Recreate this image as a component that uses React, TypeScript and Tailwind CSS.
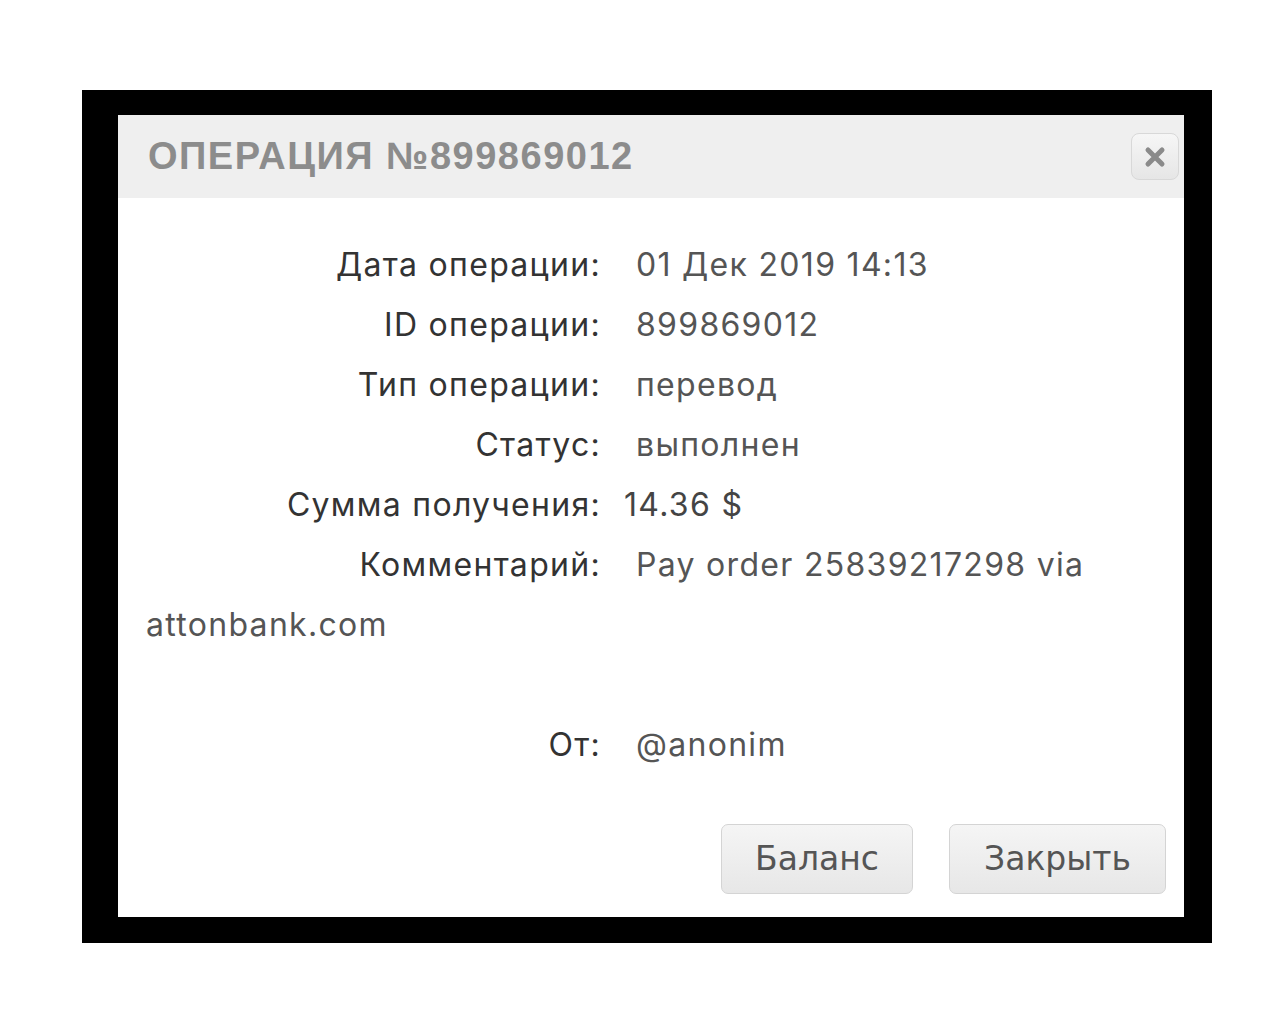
const rows: { label: string; value: string; shift?: boolean }[] = [
  { label: 'Дата операции:', value: '01 Дек 2019 14:13' },
  { label: 'ID операции:', value: '899869012' },
  { label: 'Тип операции:', value: 'перевод' },
  { label: 'Статус:', value: 'выполнен' },
  { label: 'Сумма получения:', value: '14.36 $', shift: true },
];

function Row({ label, value, shift }: { label: string; value: string; shift?: boolean }) {
  return (
    <div className="flex h-[60px] items-center">
      <span className="w-[455px] text-right text-[#333]">{label}</span>
      <span className={shift ? 'ml-[23px] text-[#444]' : 'ml-[35px] text-[#555]'}>{value}</span>
    </div>
  );
}

export default function App() {
  return (
    <div className="min-h-screen bg-white pt-[90px] pl-[82px]">
      <div className="h-[853px] w-[1130px] bg-black pt-[25px] pl-[36px]">
        <div className="flex h-[802px] w-[1066px] flex-col bg-white">
          <div className="flex h-[83px] items-center justify-between bg-[#efefef] pl-[30px] pr-[5px]">
            <h1
              className="text-[38px] font-bold tracking-[1.5px] text-[#8c8c8c]"
              style={{ fontFamily: '"Liberation Sans", Arial, sans-serif' }}
            >
              ОПЕРАЦИЯ №899869012
            </h1>
            <button className="flex h-[47px] w-[48px] items-center justify-center rounded-[8px] border border-[#d8d8d8] bg-gradient-to-b from-[#f6f6f6] to-[#e6e6e6]">
              <svg width="22" height="22" viewBox="0 0 22 22">
                <path d="M4 4 L18 18 M18 4 L4 18" stroke="#8a8a8a" strokeWidth="5" strokeLinecap="round" />
              </svg>
            </button>
          </div>

          <div
            className="pt-[37px] pl-[28px] text-[32px] tracking-[1.3px]"
            style={{ fontFamily: 'Inter, "Noto Sans", sans-serif' }}
          >
            {rows.map((r) => (
              <Row key={r.label} {...r} />
            ))}
            <div className="flex h-[60px] items-center">
              <span className="w-[455px] text-right text-[#333]">Комментарий:</span>
              <span className="ml-[35px] text-[#555]">Pay order 25839217298 via</span>
            </div>
            <div className="flex h-[60px] items-center text-[#555]">attonbank.com</div>
            <div className="h-[60px]" />
            <Row label="От:" value="@anonim" />
          </div>

          <div
            className="mt-[49px] flex justify-end gap-[36px] pr-[18px] text-[33px] text-[#555]"
            style={{ fontFamily: '"DejaVu Sans", Verdana, sans-serif' }}
          >
            <button className="h-[70px] w-[192px] rounded-[7px] border border-[#d4d4d4] bg-gradient-to-b from-[#f5f5f5] to-[#e7e7e7]">
              Баланс
            </button>
            <button className="h-[70px] w-[217px] rounded-[7px] border border-[#d4d4d4] bg-gradient-to-b from-[#f5f5f5] to-[#e7e7e7]">
              Закрыть
            </button>
          </div>
        </div>
      </div>
    </div>
  );
}
